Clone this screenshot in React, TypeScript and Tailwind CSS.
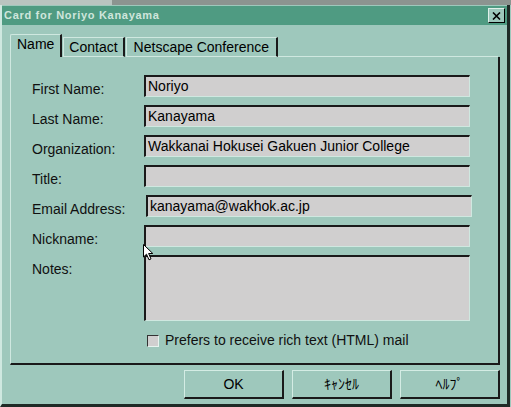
import React from 'react';

const ui = { fontFamily: '"Liberation Sans", "Noto Sans CJK JP", sans-serif' };

interface Field {
  label: string;
  value: string;
  tall?: boolean;
  shift?: boolean;
}

const fields: Field[] = [
  { label: 'First Name:', value: 'Noriyo' },
  { label: 'Last Name:', value: 'Kanayama' },
  { label: 'Organization:', value: 'Wakkanai Hokusei Gakuen Junior College' },
  { label: 'Title:', value: '' },
  { label: 'Email Address:', value: 'kanayama@wakhok.ac.jp', shift: true },
  { label: 'Nickname:', value: '' },
  { label: 'Notes:', value: '', tall: true },
];

const Sunken: React.FC<{ value: string; tall?: boolean; shift?: boolean }> = ({ value, tall, shift }) => (
  <div
    className={`${tall ? 'h-[66px]' : 'h-[22px]'} ${shift ? 'ml-[2px]' : ''} w-[326px] bg-[#d0cfcf] border-t-2 border-l-2 border-t-[#1a1a1a] border-l-[#1a1a1a] border-b border-r border-b-[#cfe8e0] border-r-[#cfe8e0] px-[2px] text-[14px] leading-[18px] text-black`}
  >
    {value}
  </div>
);

const Button: React.FC<{ label: string }> = ({ label }) => (
  <div className="w-[100px] h-[29px] flex items-center justify-center border-t border-l border-t-[#d4ece4] border-l-[#d4ece4] border-b-2 border-r-2 border-b-[#1a1a1a] border-r-[#1a1a1a] text-[14px] text-black">
    {label}
  </div>
);

export default function App() {
  return (
    <div className="relative w-[511px] h-[407px] overflow-hidden bg-[#9ec8bc] flex flex-col" style={ui}>
      {/* window behind */}
      <div className="h-[5px] flex shrink-0">
        <div className="w-[112px] bg-[#b9c4c0]" />
        <div className="flex-1 bg-[#8c9490]" />
      </div>

      <div className="flex-1 flex flex-col border-l-2 border-l-[#cfe8e0] border-r-[3px] border-r-[#1f2a26] border-b-[3px] border-b-[#1f2a26] mr-[1px]">
        {/* title bar */}
        <div className="h-[19px] mt-[1px] bg-[#4f9b82] flex items-center justify-between pl-[2px] pr-[2px] shrink-0">
          <span className="text-[11px] font-bold tracking-[0.7px] text-[#cfe6dc]">Card for Noriyo Kanayama</span>
          <div className="w-[17px] h-[15px] bg-[#9ec8bc] border-t border-l border-t-[#e0f0ea] border-l-[#e0f0ea] border-b border-r border-b-black border-r-black flex items-center justify-center">
            <svg width="9" height="8" viewBox="0 0 9 8">
              <path d="M1 0.5 L8 7.5 M8 0.5 L1 7.5" stroke="black" strokeWidth="1.6" />
            </svg>
          </div>
        </div>

        {/* tabs */}
        <div className="flex items-end pl-[8px] mt-[9px] h-[23px] shrink-0 text-[14px] text-black">
          <div className="h-[23px] px-[6px] pb-[4px] flex items-center border-t border-l border-t-[#cfe8e0] border-l-[#cfe8e0] border-r-2 border-r-[#1a1a1a] rounded-tl-[2px]">
            Name
          </div>
          <div className="h-[20px] ml-[1px] px-[5px] flex items-center border-t border-l border-t-[#cfe8e0] border-l-[#cfe8e0] border-r-2 border-r-[#1a1a1a] border-b border-b-[#cfe8e0]">
            Contact
          </div>
          <div className="h-[20px] ml-[1px] px-[7px] flex items-center border-t border-l border-t-[#cfe8e0] border-l-[#cfe8e0] border-r-2 border-r-[#1a1a1a] border-b border-b-[#cfe8e0]">
            Netscape Conference
          </div>
          <div className="flex-1 h-px bg-[#cfe8e0] mr-[9px]" />
        </div>

        {/* panel */}
        <div className="ml-[8px] mr-[7px] h-[308px] border-l border-l-[#cfe8e0] border-r-2 border-r-[#1a1a1a] border-b-2 border-b-[#1a1a1a] pl-[21px] pt-[18px] shrink-0">
          <div className="grid grid-cols-[112px_330px] gap-y-[8px] items-start">
            {fields.map((f) => (
              <React.Fragment key={f.label}>
                <div className="h-[22px] text-[14px] text-[#101010] leading-[18px] pt-[5px]">{f.label}</div>
                <Sunken value={f.value} tall={f.tall} shift={f.shift} />
              </React.Fragment>
            ))}
          </div>
          <div className="flex items-center ml-[115px] mt-[9px] gap-[6px] text-[14px] text-[#101010]">
            <div className="w-[12px] h-[12px] bg-[#d0cfcf] border-t border-l border-t-[#333] border-l-[#333] border-b border-r border-b-[#e6f4ef] border-r-[#e6f4ef]" />
            <span>Prefers to receive rich text (HTML) mail</span>
          </div>
        </div>

        {/* buttons */}
        <div className="flex justify-end gap-[8px] mr-[7px] mt-[5px]">
          <Button label="OK" />
          <Button label="ｷｬﾝｾﾙ" />
          <Button label="ﾍﾙﾌﾟ" />
        </div>
      </div>

      {/* mouse pointer */}
      <svg className="absolute left-[143px] top-[244px]" width="11" height="17" viewBox="0 0 11 17">
        <path d="M0.5 0.5 L0.5 13 L3.5 10.2 L6 15.8 L8 14.9 L5.6 9.5 L9.8 9.5 Z" fill="white" stroke="black" strokeWidth="1" />
      </svg>
    </div>
  );
}
